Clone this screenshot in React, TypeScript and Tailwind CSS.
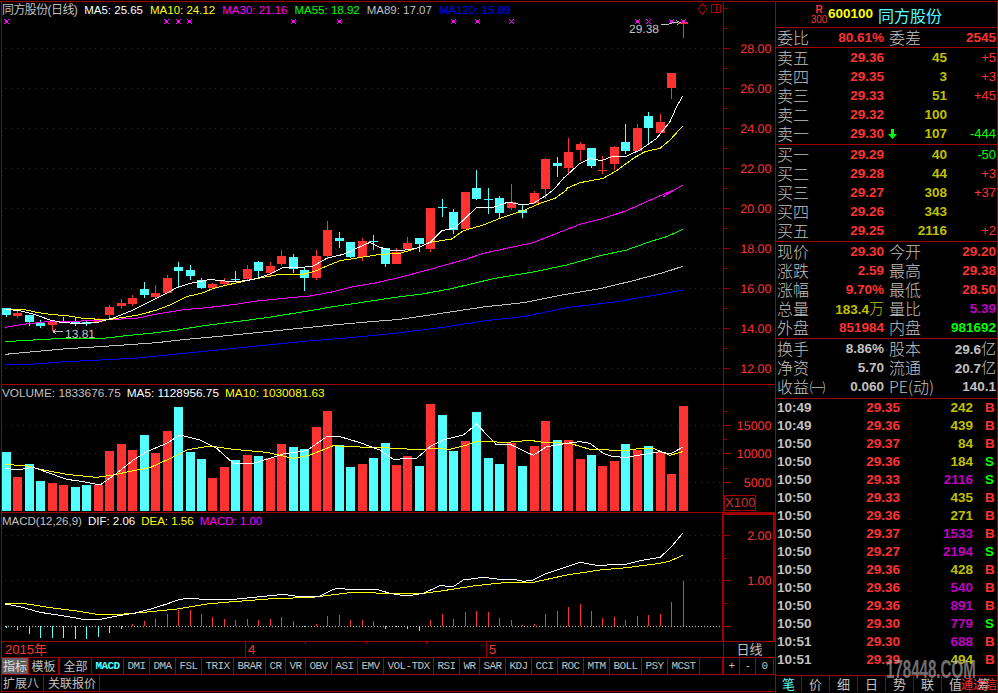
const RED = "#ff3232"
const CYAN = "#54ffff"
const LINE = "#a00000"

// crop coordinates (3x) -> page coordinates
const crop = (ox: number, oy: number, pts: number[][]) => pts.map(([x, y]) => `${ox + x / 3},${oy + y / 3}`).join(" ")

type Candle = [number, number, number, number, "r" | "c"]

const candles: Candle[] = [
  [308, 315, 308, 317, "c"], [313, 316, 311, 318, "r"], [315, 322, 315, 326, "c"], [323, 326, 320, 328, "c"],
  [321, 325, 321, 331, "r"], [322, 323, 317, 323, "c"], [322, 324, 317, 326, "c"], [322, 324, 320, 326, "c"],
  [320, 322, 318, 323, "r"], [307, 315, 305, 318, "r"], [303, 306, 299, 309, "r"], [298, 304, 295, 306, "r"],
  [289, 295, 282, 298, "c"], [293, 297, 285, 299, "r"], [278, 293, 275, 293, "r"], [267, 271, 262, 287, "c"],
  [270, 276, 265, 280, "c"], [280, 288, 278, 289, "c"], [284, 288, 283, 289, "r"], [281, 284, 278, 285, "r"],
  [279, 280, 271, 282, "c"], [269, 279, 265, 280, "r"], [262, 271, 261, 278, "c"], [266, 273, 262, 276, "r"],
  [256, 264, 250, 266, "r"], [257, 269, 254, 273, "c"], [270, 278, 267, 291, "c"], [256, 278, 250, 280, "r"],
  [230, 256, 221, 258, "r"], [238, 241, 232, 248, "c"], [242, 257, 242, 258, "c"], [241, 257, 238, 261, "r"],
  [241, 242, 235, 250, "c"], [248, 264, 248, 267, "c"], [252, 264, 248, 264, "r"], [243, 249, 237, 249, "r"],
  [238, 244, 238, 252, "c"], [208, 249, 208, 252, "r"], [207, 208, 199, 217, "c"], [212, 230, 209, 234, "c"],
  [192, 229, 192, 229, "r"], [188, 199, 170, 200, "c"], [199, 200, 188, 214, "c"], [198, 213, 196, 219, "c"],
  [202, 208, 184, 210, "r"], [210, 213, 205, 218, "c"], [193, 203, 191, 204, "r"], [159, 189, 158, 199, "r"],
  [163, 166, 157, 177, "c"], [152, 168, 138, 175, "r"], [144, 150, 142, 161, "r"], [148, 166, 148, 168, "c"],
  [170, 171, 156, 174, "r"], [147, 164, 146, 170, "r"], [142, 151, 124, 154, "c"], [128, 151, 124, 152, "r"],
  [116, 128, 112, 143, "c"], [122, 133, 114, 134, "r"], [73, 88, 73, 99, "r"], [22, 24, 22, 38, "r"],
]

const volumes: [number, "r" | "c"][] = [
  [452, "c"], [477, "r"], [464, "c"], [481, "c"], [483, "r"], [485, "r"], [487, "c"], [485, "c"], [485, "r"], [451, "r"],
  [444, "r"], [450, "r"], [435, "c"], [453, "r"], [431, "r"], [407, "c"], [452, "c"], [459, "c"], [478, "r"], [467, "r"],
  [460, "c"], [455, "r"], [456, "c"], [458, "r"], [444, "r"], [447, "c"], [449, "c"], [427, "r"], [411, "r"], [445, "c"],
  [467, "c"], [464, "r"], [458, "c"], [443, "c"], [465, "r"], [456, "r"], [466, "c"], [404, "r"], [415, "c"], [451, "c"],
  [441, "r"], [412, "c"], [458, "c"], [464, "c"], [443, "r"], [466, "c"], [446, "r"], [421, "r"], [440, "c"], [440, "r"],
  [459, "r"], [455, "c"], [466, "r"], [461, "r"], [444, "c"], [450, "r"], [446, "c"], [452, "r"], [474, "r"], [406, "r"],
]

const macdBars = [
  627, 629, 633, 637, 637, 637, 638, 638, 636, 632, 628, 624, 621, 619, 614, 610, 610, 614, 617, 619,
  620, 619, 620, 619, 617, 621, 626, 624, 616, 615, 620, 620, 621, 628, 626, 628, 630, 620, 614, 619,
  612, 611, 612, 618, 620, 625, 624, 614, 611, 607, 604, 611, 618, 617, 620, 616, 615, 614, 602, 581,
]

const cx = (i: number) => Math.round(6 + i * 11.47)

const ma5 =
  crop(0, 190, [[18, 358], [60, 362], [100, 372], [150, 390], [190, 398], [230, 400], [290, 398], [310, 392], [340, 384], [400, 360], [450, 335], [500, 310], [530, 293], [570, 280], [630, 268], [660, 272], [700, 275], [740, 272], [770, 265], [810, 252], [850, 232], [900, 233], [940, 228], [980, 205], [1030, 193], [1070, 175], [1110, 157], [1140, 172], [1170, 180], [1200, 182]]) + " " +
  crop(400, 190, [[50, 175], [90, 157], [125, 122], [160, 115], [185, 95], [230, 52], [280, 52], [325, 36], [370, 45], [400, 40], [440, 15], [460, 0]]) + " " +
  crop(400, 0, [[490, 535], [540, 490], [570, 475], [605, 482], [640, 468], [680, 468], [720, 450], [770, 415], [810, 365], [830, 320], [848, 288]])
const ma10 =
  crop(0, 190, [[18, 358], [70, 358], [110, 367], [150, 373], [200, 377], [250, 385], [300, 388], [340, 387], [420, 374], [470, 360], [510, 345], [560, 320], [610, 308], [640, 295], [690, 283], [740, 272], [790, 262], [840, 253], [910, 253], [950, 242], [980, 228], [1020, 212], [1090, 201], [1140, 193], [1200, 190]]) + " " +
  crop(400, 190, [[50, 175], [90, 157], [155, 147], [190, 122], [250, 105], [300, 85], [370, 62], [420, 40], [465, 25], [500, 0]]) + " " +
  crop(400, 0, [[500, 565], [540, 548], [610, 535], [650, 512], [700, 475], [735, 455], [780, 445], [810, 420], [848, 378]])
const ma30 =
  crop(0, 190, [[15, 412], [70, 403], [140, 395], [210, 394], [280, 392], [340, 388], [410, 385], [470, 372], [560, 358], [620, 353], [700, 344], [770, 333], [850, 325], [930, 318], [1000, 305], [1060, 290], [1130, 278], [1200, 262]]) + " " +
  crop(400, 190, [[90, 238], [200, 207], [250, 190], [320, 175], [400, 158], [470, 130], [540, 103], [610, 85], [680, 62], [740, 35], [820, 0]]) + " " +
  crop(400, 0, [[790, 590], [848, 555]])
const ma55 =
  crop(0, 190, [[15, 455], [100, 450], [170, 446], [310, 445], [370, 438], [450, 430], [530, 420], [620, 406], [700, 396], [800, 383], [900, 367], [1000, 350], [1100, 335], [1200, 320]]) + " " +
  crop(400, 190, [[60, 313], [150, 297], [280, 266], [400, 246], [500, 225], [600, 197], [680, 180], [750, 155], [800, 140], [848, 118]])
const ma89 =
  crop(0, 190, [[15, 493], [100, 485], [200, 476], [300, 470], [400, 463], [470, 458], [550, 449], [700, 435], [850, 420], [1000, 405], [1100, 396], [1200, 388]]) + " " +
  crop(400, 190, [[110, 372], [250, 351], [370, 338], [480, 316], [600, 296], [700, 272], [790, 248], [848, 229]])
const ma120 =
  crop(0, 190, [[15, 525], [100, 522], [200, 515], [300, 510], [400, 505], [500, 495], [600, 485], [750, 470], [900, 455], [1050, 443], [1200, 428]]) + " " +
  crop(400, 190, [[130, 412], [250, 393], [370, 380], [500, 353], [650, 335], [780, 313], [848, 300]])

const volMa5 =
  crop(0, 380, [[15, 265], [50, 270], [100, 262], [150, 280], [200, 298], [250, 305], [300, 315], [350, 280], [400, 240], [440, 215], [500, 190], [540, 165], [600, 180], [650, 205], [700, 250], [760, 250], [800, 238], [850, 222], [920, 212], [980, 170], [1020, 170], [1080, 188], [1140, 210], [1180, 238], [1200, 237]]) + " " +
  crop(400, 380, [[50, 235], [90, 200], [130, 180], [190, 165], [230, 132], [290, 195], [330, 193], [400, 226], [440, 200], [500, 190], [540, 185], [570, 190], [610, 220], [640, 230], [680, 232], [720, 225], [780, 215], [810, 222], [848, 202]])
const volMa10 =
  crop(0, 380, [[15, 253], [80, 258], [120, 268], [200, 283], [290, 292], [340, 285], [400, 272], [450, 263], [500, 240], [560, 210], [630, 198], [700, 208], [800, 217], [880, 235], [930, 225], [1000, 197], [1100, 202], [1200, 205]]) + " " +
  crop(400, 380, [[50, 210], [100, 205], [150, 208], [200, 195], [230, 184], [270, 184], [310, 188], [390, 181], [430, 187], [510, 190], [570, 208], [680, 212], [720, 205], [760, 205], [810, 226], [848, 215]])
const dif =
  crop(0, 380, [[15, 672], [60, 680], [120, 697], [180, 706], [250, 718], [300, 718], [350, 708], [400, 700], [450, 688], [500, 672], [540, 658], [570, 655], [610, 658], [700, 658], [760, 652], [850, 643], [900, 650], [960, 648], [1000, 628], [1020, 625], [1060, 630], [1130, 628], [1170, 640], [1200, 645]]) + " " +
  crop(400, 380, [[40, 645], [70, 640], [120, 617], [160, 620], [190, 600], [250, 592], [300, 598], [340, 598], [370, 604], [400, 600], [440, 580], [500, 560], [540, 547], [600, 558], [640, 552], [680, 552], [720, 542], [780, 532], [810, 505], [848, 460]])
const dea =
  crop(0, 380, [[15, 670], [70, 670], [150, 683], [230, 693], [290, 703], [360, 703], [430, 697], [530, 687], [620, 672], [700, 665], [830, 655], [930, 653], [1050, 638], [1200, 640]]) + " " +
  crop(400, 380, [[70, 640], [130, 632], [220, 618], [320, 607], [400, 607], [500, 585], [600, 570], [680, 563], [780, 550], [810, 543], [848, 526]])

const markers: [number, boolean][] = [[6, true], [166, true], [178, true], [189, true], [293, true], [339, true], [453, true], [477, true], [511, false], [637, true], [648, false], [671, true], [683, true]]

const DottedGrid = ({ rows }: { rows: number[] }) => (
  <>
    {rows.map((y) => (
      <line key={y} x1={5} x2={723} y1={y + 0.5} y2={y + 0.5} stroke="#a00000" strokeDasharray="1 5" />
    ))}
  </>
)

const AxisTicks = ({ major, minor }: { major: number[]; minor: number[] }) => (
  <>
    {major.map((y) => (
      <line key={y} x1={723} x2={730} y1={y + 0.5} y2={y + 0.5} stroke={LINE} />
    ))}
    {minor.map((y) => (
      <line key={y} x1={723} x2={727} y1={y + 0.5} y2={y + 0.5} stroke={LINE} />
    ))}
  </>
)

const AxisLabel = ({ y, children }: { y: number; children: string }) => (
  <text x={771.5} y={y + 5} textAnchor="end" fill={RED} fontSize={12.5} fontFamily="'Liberation Sans', sans-serif" textRendering="geometricPrecision">
    {children}
  </text>
)

const Legend = ({ items, className }: { items: [string, string][]; className: string }) => (
  <div className={`absolute left-0 top-px flex font-['Liberation_Sans','Noto_Sans_CJK_SC',sans-serif] leading-[14px] whitespace-nowrap ${className}`}>
    {items.map(([text, color]) => (
      <span key={text} style={{ color }}>
        {text}
      </span>
    ))}
  </div>
)

const MainChart = () => {
  const major = [48, 88, 128, 168, 208, 248, 288, 328, 368]
  return (
    <div className="relative h-[382px] w-[773px]">
      <svg viewBox="2 2 773 382" width={773} height={382} className="block" shapeRendering="crispEdges">
        <DottedGrid rows={major} />
        <line x1={723.5} x2={723.5} y1={2} y2={384} stroke={LINE} />
        <AxisTicks major={major} minor={[8, 28, 68, 108, 148, 188, 228, 268, 308, 348]} />
        {candles.map(([top, bottom, wickTop, wickBottom, c], i) => {
          const color = c === "r" ? RED : CYAN
          return (
            <g key={i}>
              <line x1={cx(i) + 0.5} x2={cx(i) + 0.5} y1={wickTop} y2={wickBottom} stroke={color} />
              <rect x={cx(i) - 4} y={top} width={9} height={bottom - top} fill={color} />
            </g>
          )
        })}
        <polyline points={ma120} fill="none" stroke="#0000ff" />
        <polyline points={ma89} fill="none" stroke="#c0c0c0" />
        <polyline points={ma55} fill="none" stroke="#00ff00" />
        <polyline points={ma30} fill="none" stroke="#ff00ff" />
        <polyline points={ma10} fill="none" stroke="#ffff00" />
        <polyline points={ma5} fill="none" stroke="#ffffff" />
        {markers.map(([x, big]) => (
          <g key={x} stroke="#ff00ff">
            <path d={`M${x - 2} ${19}L${x + 3} ${24}M${x + 3} ${19}L${x - 2} ${24}`} fill="none" />
            {big && <rect x={x - 1} y={20} width={3} height={3} fill="#ff00ff" stroke="none" />}
          </g>
        ))}
        {/* high and low flags */}
        <path d="M661 24.5H668L673 22.5H678M676 20.5L680 22.5L677 24.5" fill="none" stroke="#c0c0c0" />
        <path d="M53 331.5H63M53 331.5L56 329M53 331.5L56 334" fill="none" stroke="#c0c0c0" />
        <text x={629} y={33} fill="#c0c0c0" fontSize={12} fontFamily="'Liberation Sans', sans-serif" textRendering="geometricPrecision">29.38</text>
        <text x={65} y={338} fill="#c0c0c0" fontSize={12} fontFamily="'Liberation Sans', sans-serif" textRendering="geometricPrecision">13.81</text>
        {/* corner buttons */}
        <path d="M702.5 4L707 9L702.5 14L698 9Z" fill="none" stroke={LINE} />
        <path d="M711.5 4.5H720.5V12.5H711.5ZM716.5 4.5V12.5" fill="none" stroke={LINE} />
        {major.map((y, i) => (
          <AxisLabel key={y} y={y}>{(28 - i * 2).toFixed(2)}</AxisLabel>
        ))}
      </svg>
      <div className="absolute left-0 top-px flex gap-[7px] font-['Liberation_Sans','Noto_Sans_CJK_SC',sans-serif] text-[11.5px] leading-[14px] whitespace-nowrap">
        <span className="text-[12px] tracking-[-0.6px] text-[#c0c0c0]">同方股份(日线)</span>
        <span className="text-white">MA5: 25.65</span>
        <span className="text-[#ffff00]">MA10: 24.12</span>
        <span className="text-[#ff00ff]">MA30: 21.16</span>
        <span className="text-[#00ff00]">MA55: 18.92</span>
        <span className="text-[#c0c0c0]">MA89: 17.07</span>
        <span className="text-[#0000ff]">MA120: 15.89</span>
      </div>
    </div>
  )
}

const VolumeChart = () => (
  <div className="relative h-[127px] w-[773px]">
    <svg viewBox="2 385 773 127" width={773} height={127} className="block" shapeRendering="crispEdges">
      <DottedGrid rows={[425, 453, 482]} />
      <line x1={723.5} x2={723.5} y1={385} y2={512} stroke={LINE} />
      <AxisTicks major={[425, 453, 482]} minor={[411, 439, 468, 496]} />
      {volumes.map(([top, c], i) => (
        <rect key={i} x={cx(i) - 4} y={top} width={9} height={511 - top} fill={c === "r" ? RED : CYAN} />
      ))}
      <polyline points={volMa10} fill="none" stroke="#ffff00" />
      <polyline points={volMa5} fill="none" stroke="#ffffff" />
      <AxisLabel y={425}>15000</AxisLabel>
      <AxisLabel y={453}>10000</AxisLabel>
      <AxisLabel y={482}>5000</AxisLabel>
    </svg>
    <Legend className="gap-[6px] text-[11.8px]" items={[["VOLUME: 1833676.75", "#c0c0c0"], ["MA5: 1128956.75", "#ffffff"], ["MA10: 1030081.63", "#ffff00"]]} />
    <div className="absolute left-[722px] top-[110px] h-[16px] w-[32px] border border-[#a00000] text-center font-['Liberation_Sans',sans-serif] text-[13px] leading-[14px] text-[#d03030]">
      X100
    </div>
  </div>
)

const MacdChart = () => (
  <div className="relative h-[128px] w-[773px]">
    <svg viewBox="2 513 773 128" width={773} height={128} className="block" shapeRendering="crispEdges">
      <DottedGrid rows={[535, 580]} />
      <line x1={5} x2={723} y1={626.5} y2={626.5} stroke="#c0c0c0" strokeDasharray="1 2" />
      <path d="M723 641V513.5H774V641" fill="none" stroke={LINE} strokeWidth={2} />
      <AxisTicks major={[535, 580, 626]} minor={[558, 603]} />
      {macdBars.map((top, i) => {
        const up = top < 626
        return (
          <line key={i} x1={cx(i) + 0.5} x2={cx(i) + 0.5} y1={up ? top : 626} y2={up ? 626 : top + 1} stroke={up ? RED : CYAN} />
        )
      })}
      <polyline points={dea} fill="none" stroke="#ffff00" />
      <polyline points={dif} fill="none" stroke="#ffffff" />
      <AxisLabel y={535}>2.00</AxisLabel>
      <AxisLabel y={580}>1.00</AxisLabel>
    </svg>
    <Legend className="gap-[6px] text-[11.5px]" items={[["MACD(12,26,9)", "#c0c0c0"], ["DIF: 2.06", "#ffffff"], ["DEA: 1.56", "#ffff00"], ["MACD: 1.00", "#ff00ff"]]} />
  </div>
)

const DateRow = () => (
  <div className="flex h-[15px] font-['Liberation_Sans','Noto_Sans_CJK_SC',sans-serif] text-[13px] leading-[15px] text-[#ff3232]">
    <div className="relative w-[721px]">
      <span className="absolute left-[3px]">2015年</span>
      <span className="absolute left-[243px] top-0 h-full border-l border-[#a00000]" />
      <span className="absolute left-[246px]">4</span>
      <span className="absolute left-[303px] top-0 h-[2px] border-l border-[#a00000]" />
      <span className="absolute left-[364px] top-0 h-[2px] border-l border-[#a00000]" />
      <span className="absolute left-[424px] top-0 h-[2px] border-l border-[#a00000]" />
      <span className="absolute left-[484px] top-0 h-full border-l border-[#a00000]" />
      <span className="absolute left-[487px]">5</span>
    </div>
    <div className="w-[52px] border-l border-[#a00000] text-center text-[#c0c0c0]">日线</div>
  </div>
)

const tabs = [
  { label: "指标", w: "w-[27px]", cn: "bg-[#606060] text-[#e0e0e0] font-['Noto_Sans_CJK_SC',sans-serif] text-[12px] tracking-normal" },
  { label: "模板", w: "w-[31px] border-r-2", cn: "font-['Noto_Sans_CJK_SC',sans-serif] text-[12px] tracking-normal" },
  { label: "全部", w: "w-[32px]", cn: "font-['Noto_Sans_CJK_SC',sans-serif] text-[12px] tracking-normal" },
  { label: "MACD", w: "w-[32px]", cn: "font-bold text-[#54ffff]" },
  { label: "DMI", w: "w-[26px]" },
  { label: "DMA", w: "w-[26px]" },
  { label: "FSL", w: "w-[26px]" },
  { label: "TRIX", w: "w-[32px]" },
  { label: "BRAR", w: "w-[32px]" },
  { label: "CR", w: "w-[20px]" },
  { label: "VR", w: "w-[20px]" },
  { label: "OBV", w: "w-[26px]" },
  { label: "ASI", w: "w-[26px]" },
  { label: "EMV", w: "w-[26px]" },
  { label: "VOL-TDX", w: "w-[50px]" },
  { label: "RSI", w: "w-[26px]" },
  { label: "WR", w: "w-[20px]" },
  { label: "SAR", w: "w-[26px]" },
  { label: "KDJ", w: "w-[26px]" },
  { label: "CCI", w: "w-[26px]" },
  { label: "ROC", w: "w-[26px]" },
  { label: "MTM", w: "w-[26px]" },
  { label: "BOLL", w: "w-[32px]" },
  { label: "PSY", w: "w-[26px]" },
  { label: "MCST", w: "w-[32px]" },
]

const TabRow = () => (
  <div className="flex h-[16px] font-['Liberation_Mono',monospace] text-[11px] leading-[16px] tracking-[-0.6px] text-[#c0c0c0]">
    {tabs.map((t) => (
      <div key={t.label} className={`border-r border-[#a00000] text-center ${t.w} ${t.cn ?? ""}`}>
        {t.label}
      </div>
    ))}
    <div className="w-[24px] border-r-2 border-[#a00000]" />
    <div className="w-[16px] border-r border-[#a00000] text-center">+</div>
    <div className="w-[16px] border-r border-[#a00000] text-center">-</div>
    <div className="w-[18px] border-r border-[#a00000] text-center">0</div>
  </div>
)

const BottomRow = () => (
  <div className="flex h-[16px] font-['Noto_Sans_CJK_SC',sans-serif] text-[12px] leading-[16px] whitespace-nowrap text-[#c0c0c0]">
    <div className="w-[42px] border-r border-[#a00000] pl-px">扩展八</div>
    <div className="w-[56px] border-r border-[#a00000] pl-[4px]">关联报价</div>
  </div>
)

const Num = ({ color, children, className = "" }: { color: string; children: string; className?: string }) => {
  const unit = children.match(/^(.*?)([万亿])$/)
  return (
    <span className={`font-['Liberation_Sans','Noto_Sans_CJK_SC',sans-serif] text-[13.5px] font-bold ${className}`} style={{ color }}>
      {unit ? unit[1] : children}
      {unit && <span className="text-[15px] font-light">{unit[2]}</span>}
    </span>
  )
}

const Label = ({ children, className = "" }: { children: string; className?: string }) => (
  <span className={`font-['Noto_Sans_CJK_SC',sans-serif] text-[16px] font-light text-[#c0c0c0] ${className}`}>{children}</span>
)

const quote = (rows: [string, string, string, string, string][]) =>
  rows.map(([name, price, vol, diff, arrow]) => (
    <div key={name} className="flex h-[19px] items-center leading-[19px]">
      <Label className="w-[72px] pl-px">{name}</Label>
      <Num color={RED} className="w-[36px] text-right">{price}</Num>
      <span className="w-[15px] pl-[4px]">
        {arrow && (
          <svg viewBox="0 0 9 10" width={9} height={10} className="block">
            <path d="M3 0H6V5H9L4.5 10L0 5H3Z" fill="#00ff00" />
          </svg>
        )}
      </span>
      <Num color="#c0c000" className="w-[48px] text-right">{vol}</Num>
      <span className={`flex-1 pr-px text-right font-['Liberation_Sans',sans-serif] text-[13px] ${diff.startsWith("-") ? "text-[#00ff00]" : "text-[#ff3232]"}`}>{diff}</span>
    </div>
  ))

const PairRow = ({ a, av, ac, b, bv, bc }: { a: string; av: string; ac: string; b: string; bv: string; bc: string }) => (
  <div className="flex h-[19px] items-center leading-[19px]">
    <div className="flex w-[108px] justify-between pl-px">
      <Label>{a}</Label>
      <Num color={ac}>{av}</Num>
    </div>
    <div className="ml-[5px] flex flex-1 justify-between pr-px">
      <Label>{b}</Label>
      <Num color={bc}>{bv}</Num>
    </div>
  </div>
)

const ticks: [string, string, string, string][] = [
  ["10:49", "29.35", "242", "B"], ["10:49", "29.36", "439", "B"], ["10:50", "29.37", "84", "B"], ["10:50", "29.36", "184", "S"],
  ["10:50", "29.33", "2116", "S"], ["10:50", "29.33", "435", "B"], ["10:50", "29.36", "271", "B"], ["10:50", "29.37", "1533", "B"],
  ["10:50", "29.27", "2194", "S"], ["10:50", "29.36", "428", "B"], ["10:50", "29.36", "540", "B"], ["10:50", "29.36", "891", "B"],
  ["10:50", "29.30", "779", "S"], ["10:51", "29.30", "688", "B"], ["10:51", "29.39", "494", "B"],
]

const bottomTabs = ["笔", "价", "细", "日", "势", "联", "值", "筹"]

const RightPanel = () => (
  <div className="relative flex h-[691px] w-[223px] flex-col border-x border-[#a00000]">
    <div className="flex h-[26px] items-center border-b border-[#a00000] pl-[35px]">
      <div className="flex w-[16px] flex-col items-center font-['Liberation_Sans',sans-serif] leading-[10px] text-[#ff3232]">
        <span className="text-[10px] font-bold">R</span>
        <span className="text-[10px]">300</span>
      </div>
      <Num color="#ffff00" className="ml-[1px]">600100</Num>
      <span className="ml-[5px] font-['Noto_Sans_CJK_SC',sans-serif] text-[16px] leading-[20px] text-[#54ffff]">同方股份</span>
    </div>
    <div className="flex h-[20px] items-center border-b border-[#a00000] leading-[19px]">
      <div className="flex w-[108px] justify-between pl-px">
        <Label>委比</Label>
        <Num color={RED}>80.61%</Num>
      </div>
      <div className="ml-[5px] flex flex-1 justify-between pr-px">
        <Label>委差</Label>
        <Num color={RED}>2545</Num>
      </div>
    </div>
    <div className="h-[97px] border-b border-[#a00000]">
      {quote([
        ["卖五", "29.36", "45", "+5", ""],
        ["卖四", "29.35", "3", "+3", ""],
        ["卖三", "29.33", "51", "+45", ""],
        ["卖二", "29.32", "100", "", ""],
        ["卖一", "29.30", "107", "-444", "down"],
      ])}
    </div>
    <div className="h-[97px] border-b border-[#a00000]">
      {quote([
        ["买一", "29.29", "40", "-50", ""],
        ["买二", "29.28", "44", "+3", ""],
        ["买三", "29.27", "308", "+37", ""],
        ["买四", "29.26", "343", "", ""],
        ["买五", "29.25", "2116", "+2", ""],
      ])}
    </div>
    <div className="h-[97px] border-b border-[#a00000]">
      <PairRow a="现价" av="29.30" ac={RED} b="今开" bv="29.20" bc={RED} />
      <PairRow a="涨跌" av="2.59" ac={RED} b="最高" bv="29.38" bc={RED} />
      <PairRow a="涨幅" av="9.70%" ac={RED} b="最低" bv="28.50" bc={RED} />
      <PairRow a="总量" av="183.4万" ac="#c0c000" b="量比" bv="5.39" bc="#c000c0" />
      <PairRow a="外盘" av="851984" ac={RED} b="内盘" bv="981692" bc="#00ff00" />
    </div>
    <div className="h-[60px] border-b border-[#a00000]">
      <PairRow a="换手" av="8.86%" ac="#c0c0c0" b="股本" bv="29.6亿" bc="#c0c0c0" />
      <PairRow a="净资" av="5.70" ac="#c0c0c0" b="流通" bv="20.7亿" bc="#c0c0c0" />
      <div className="flex h-[19px] items-center leading-[19px]">
        <div className="flex w-[108px] justify-between pl-px">
          <span className="flex items-center">
            <Label>收益</Label>
            <span className="font-['Noto_Sans_CJK_SC',sans-serif] text-[13px] font-light tracking-[-2px] text-[#c0c0c0]">(一)</span>
          </span>
          <Num color="#c0c0c0">0.060</Num>
        </div>
        <div className="ml-[5px] flex flex-1 justify-between pr-px">
          <Label>PE(动)</Label>
          <Num color="#c0c0c0">140.1</Num>
        </div>
      </div>
    </div>
    <div className="h-[277px] border-b border-[#a00000]">
      {ticks.map(([time, price, vol, side], i) => (
        <div key={i} className="flex h-[18px] items-center leading-[18px]">
          <Num color="#c0c0c0" className="w-[70px] pl-px">{time}</Num>
          <Num color={RED} className="w-[54px] text-right">{price}</Num>
          <Num color={Number(vol) >= 500 ? "#c000c0" : "#c0c000"} className="w-[73px] text-right">{vol}</Num>
          <Num color={side === "B" ? RED : "#00ff00"} className="pl-[12px]">{side}</Num>
        </div>
      ))}
    </div>
    <div className="flex h-[16px] font-['Noto_Sans_CJK_SC',sans-serif] text-[13px] leading-[16px] text-[#c0c0c0]">
      {bottomTabs.map((t, i) => (
        <div key={t} className={`border-r border-[#a00000] text-center last:border-r-0 ${i === 0 ? "w-[26px] text-[#54ffff]" : "flex-1"}`}>
          {t}
        </div>
      ))}
    </div>
    {/* site watermark on top of the tick list */}
    <div className="absolute left-[110px] top-[655px] origin-left scale-x-[0.58] font-['Liberation_Sans',sans-serif] text-[26px] font-bold leading-[24px] whitespace-nowrap text-[#b0b0b0]/65">
      178448.COM
    </div>
    <div className="absolute right-0 top-[674px] font-['Noto_Sans_CJK_SC',sans-serif] text-[12px] leading-[15px] text-[#ff3232]">通达信</div>
  </div>
)

export default function App() {
  return (
    <div className="h-[693px] w-[998px] overflow-hidden bg-black pt-px">
      <div className="flex border-t border-[#a00000]">
        <div className="ml-px h-[691px] w-[774px] border-l border-[#a00000]">
          <MainChart />
          <div className="border-t border-[#a00000]">
            <VolumeChart />
          </div>
          <div className="border-t border-[#a00000]">
            <MacdChart />
          </div>
          <div className="border-t border-[#a00000]">
            <DateRow />
          </div>
          <div className="border-t border-[#a00000]">
            <TabRow />
          </div>
          <div className="border-y border-[#a00000]">
            <BottomRow />
          </div>
        </div>
        <RightPanel />
      </div>
    </div>
  )
}
